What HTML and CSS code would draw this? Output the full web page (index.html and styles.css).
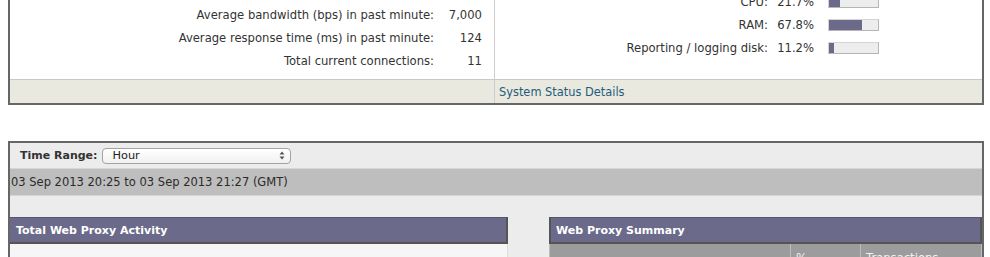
FILE: index.html
```html
<!DOCTYPE html>
<html>
<head>
<meta charset="utf-8">
<link rel="stylesheet" href="styles.css">
</head>
<body>
<div class="panel status">
  <div class="status-body">
    <div class="stats">
      <div class="label">Average bandwidth (bps) in past minute:</div><div class="value">7,000</div>
      <div class="label">Average response time (ms) in past minute:</div><div class="value">124</div>
      <div class="label">Total current connections:</div><div class="value">11</div>
    </div>
    <div class="usage">
      <div class="label">CPU:</div><div class="value">21.7%</div>
      <div class="barcell"><div class="bar"><div class="fill" style="width:21.7%"></div></div></div>
      <div class="label">RAM:</div><div class="value">67.8%</div>
      <div class="barcell"><div class="bar"><div class="fill" style="width:67.8%"></div></div></div>
      <div class="label">Reporting / logging disk:</div><div class="value">11.2%</div>
      <div class="barcell"><div class="bar"><div class="fill" style="width:11.2%"></div></div></div>
    </div>
  </div>
  <div class="status-foot">
    <div class="foot-left"></div>
    <div class="foot-right"><a href="#" class="link">System Status Details</a></div>
  </div>
</div>

<div class="panel report">
  <div class="range-row">
    <span class="range-label">Time Range:</span>
    <div class="select">
      <span>Hour</span>
      <svg class="arrows" width="6" height="9" viewBox="0 0 6 9"><path d="M3 0.5 L5.5 3.5 L0.5 3.5 Z M3 8.5 L5.5 5.5 L0.5 5.5 Z" fill="#555"/></svg>
    </div>
  </div>
  <div class="date-band">03 Sep 2013 20:25 to 03 Sep 2013 21:27 (GMT)</div>
  <div class="spacer"></div>
  <div class="boxes">
    <div class="box box-left">
      <div class="box-head">Total Web Proxy Activity</div>
      <div class="box-body"></div>
    </div>
    <div class="box box-right">
      <div class="box-head">Web Proxy Summary</div>
      <div class="table-head">
        <div class="th th-name"></div>
        <div class="th th-pct">%</div>
        <div class="th th-tx">Transactions</div>
      </div>
    </div>
  </div>
</div>
</body>
</html>
```

FILE: styles.css
```css
html, body {
  margin: 0;
  padding: 0;
  background: #ffffff;
}
body {
  font-family: "DejaVu Sans", Verdana, sans-serif;
  font-size: 11.6px;
  color: #333333;
  overflow: hidden;
}
.panel {
  margin-left: 8px;
  margin-right: 6px;
  border: 2px solid #666666;
}
.status {
  margin-top: -12px;
}
.status-body {
  display: grid;
  grid-template-columns: 485px 1fr;
  background: #ffffff;
}
.stats {
  border-right: 1px solid #cccccc;
  padding: 13px 0 7px 0;
  display: grid;
  grid-template-columns: 1fr 55px;
  grid-auto-rows: 23px;
  align-items: center;
}
.stats .label {
  text-align: right;
  padding-right: 5px;
}
.stats .value {
  text-align: right;
  padding-right: 12px;
}
.usage {
  display: grid;
  grid-template-columns: 1fr 46px 65px;
  grid-auto-rows: 23px;
  align-items: center;
  padding-right: 103px;
  align-content: start;
}
.usage .label {
  text-align: right;
}
.usage .value {
  text-align: right;
}
.barcell {
  padding-left: 14px;
  display: flex;
  align-items: center;
}
.bar {
  width: 51px;
  height: 12px;
  box-sizing: border-box;
  background: #ededed;
  border: 1px solid #d4d4d4;
  border-right-color: #b5b5b5;
  border-bottom-color: #b5b5b5;
  display: flex;
}
.fill {
  height: 100%;
  background: #6b6a8a;
}
.status-foot {
  display: grid;
  grid-template-columns: 485px 1fr;
  border-top: 1px solid #c9c9c9;
  background: #e9e9df;
  height: 23px;
}
.foot-left {
  border-right: 1px solid #cccccc;
}
.foot-right {
  display: flex;
  align-items: center;
  padding-left: 4px;
}
.link {
  color: #255c7c;
  text-decoration: none;
  font-size: 11.4px;
}
.report {
  margin-top: 36px;
  border-bottom: none;
  background: #ececec;
  height: 200px;
}
.range-row {
  height: 25px;
  display: flex;
  align-items: center;
  padding-left: 10px;
  gap: 5px;
  border-bottom: 1px solid #d6d6d6;
}
.range-label {
  font-weight: bold;
  font-size: 11px;
  color: #333333;
}
.select {
  width: 189px;
  height: 16px;
  box-sizing: border-box;
  border: 1px solid #a3a3a3;
  border-radius: 4px;
  background: linear-gradient(#ffffff, #f1f1f1);
  display: flex;
  align-items: center;
  justify-content: space-between;
  padding: 0 5px 0 9px;
  color: #222222;
  font-size: 11.3px;
}
.arrows {
  display: block;
}
.date-band {
  height: 27px;
  box-sizing: border-box;
  background: #bebebe;
  border-bottom: 1px solid #d4d4d4;
  display: flex;
  align-items: center;
  padding-left: 1px;
  font-size: 11.5px;
  color: #2b2b2b;
}
.spacer {
  height: 21px;
}
.boxes {
  display: grid;
  grid-template-columns: 498px 1fr;
  column-gap: 41px;
}
.box-head {
  height: 27px;
  box-sizing: border-box;
  background: #6b6a8a;
  border-top: 1px solid #57566e;
  border-bottom: 2px solid #555555;
  border-right: 2px solid #555555;
  color: #ffffff;
  font-weight: bold;
  font-size: 11px;
  display: flex;
  align-items: center;
  padding-left: 6px;
}
.box-right .box-head {
  border-left: 2px solid #555555;
  padding-left: 5px;
}
.box-body {
  height: 40px;
  background: #f6f6f6;
  border-right: 1px solid #dddddd;
}
.table-head {
  display: grid;
  grid-template-columns: 241px 70px 1fr;
  background: #9c9c9c;
  height: 40px;
  border-left: 1px solid #bdbdbd;
}
.th {
  color: #f2f2f2;
  padding: 7px 0 0 5px;
  border-right: 1px solid #bdbdbd;
}
```
